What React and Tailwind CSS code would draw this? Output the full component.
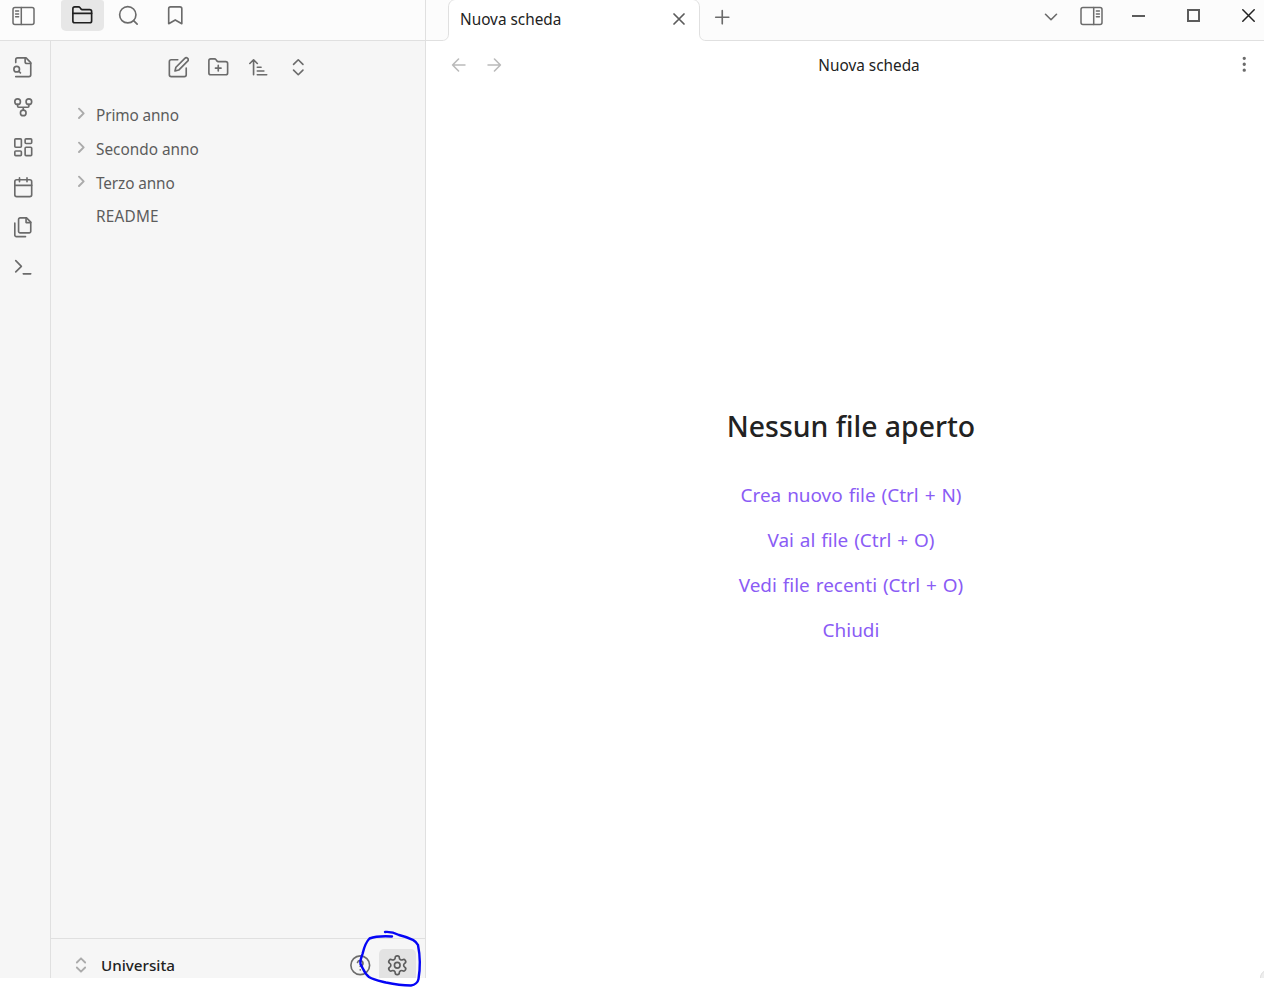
import React from "react";

function Icon({ className = "size-[22.5px]", sw = 1.75, box = "0 0 24 24", children }) {
  return (
    <svg
      viewBox={box}
      className={`shrink-0 ${className}`}
      fill="none"
      stroke="currentColor"
      strokeWidth={sw}
      strokeLinecap="round"
      strokeLinejoin="round"
    >
      {children}
    </svg>
  );
}

const ribbon = [
  <>
    <path d="M4 22h14a2 2 0 0 0 2-2V7l-5-5H6a2 2 0 0 0-2 2v3" />
    <path d="M14 2v4a2 2 0 0 0 2 2h4" />
    <circle cx="5" cy="14" r="3" />
    <path d="m9 18-1.5-1.5" />
  </>,
  <>
    <circle cx="12" cy="18" r="3" />
    <circle cx="6" cy="6" r="3" />
    <circle cx="18" cy="6" r="3" />
    <path d="M18 9v2c0 .6-.4 1-1 1H7c-.6 0-1-.4-1-1V9M12 12v3" />
  </>,
  <>
    <rect x="3" y="3" width="7" height="9" rx="1" />
    <rect x="14" y="3" width="7" height="5" rx="1" />
    <rect x="14" y="12" width="7" height="9" rx="1" />
    <rect x="3" y="16" width="7" height="5" rx="1" />
  </>,
  <>
    <rect x="3" y="4" width="18" height="18" rx="2" />
    <path d="M16 2v4M8 2v4M3 10h18" />
  </>,
  <>
    <path d="M15.5 2H8.6c-.4 0-.8.2-1.1.5-.3.3-.5.7-.5 1.1v12.8c0 .4.2.8.5 1.1.3.3.7.5 1.1.5h9.8c.4 0 .8-.2 1.1-.5.3-.3.5-.7.5-1.1V6.5L15.5 2z" />
    <path d="M3 7.6v12.8c0 .4.2.8.5 1.1.3.3.7.5 1.1.5h9.8M15 2v5h5" />
  </>,
  <path d="m4 17 6-6-6-6M12 19h8" />,
];

const tools = [
  <g transform="translate(.5 0)">
    <path d="M11 4H4a2 2 0 0 0-2 2v14a2 2 0 0 0 2 2h14a2 2 0 0 0 2-2v-7" />
    <path d="M18.5 2.5a2.121 2.121 0 0 1 3 3L12 15l-4 1 1-4 9.5-9.5z" />
  </g>,
  <>
    <path d="M4 20h16a2 2 0 0 0 2-2V8a2 2 0 0 0-2-2h-7.93a2 2 0 0 1-1.66-.9l-.82-1.2A2 2 0 0 0 7.93 3H4a2 2 0 0 0-2 2v13c0 1.1.9 2 2 2Z" />
    <path d="M12 10v6M9 13h6" />
  </>,
  <path d="m3 8 4-4 4 4M7 4v16M11 12h4M11 16h7M11 20h10" />,
  <path d="m7 15 5 5 5-5M7 9l5-5 5 5" />,
];

function PanelIcon({ right }) {
  return (
    <svg
      viewBox="0 0 23 20"
      className={right ? "h-5 w-[23px] shrink-0 -scale-x-100" : "h-5 w-[23px] shrink-0"}
      fill="none"
      stroke="currentColor"
      strokeWidth="1.5"
      strokeLinecap="round"
    >
      <rect x="1" y="1.5" width="21" height="17" rx="2" />
      <path d="M9.3 1.5v17M3.6 5.1h3M3.6 7.9h3M3.6 10.7h3" />
    </svg>
  );
}

function TreeRow({ label, folder, text }) {
  return (
    <div className="flex h-[33.6px] items-center pl-[22px]">
      <div className="flex w-[23px] pb-[2px] text-[#ababab]">
        {folder && (
          <Icon className="size-4" sw={2.9}>
            <path d="m9 18 7-7-7-7" />
          </Icon>
        )}
      </div>
      <span className={`text-[15.35px] leading-5 whitespace-nowrap text-[#5c5c5c] ${text}`}>{label}</span>
    </div>
  );
}

function Header() {
  return (
    <header className="flex h-[41px] bg-[#fcfcfc] text-[#6b6b6b]">
      <div className="flex w-[426px] border-r border-b border-[#e0e0e0]">
        <div className="w-[61px] pt-[6px] pl-[12px]">
          <PanelIcon />
        </div>
        <div className="flex h-[31px] w-[43px] justify-center rounded-b-[5px] rounded-t-[3px] bg-[#e7e7e7] pt-[4px] text-[#1f1f1f]">
          <Icon>
            <path d="M20 20a2 2 0 0 0 2-2V8a2 2 0 0 0-2-2h-7.9a2 2 0 0 1-1.69-.9L9.6 3.9A2 2 0 0 0 7.93 3H4a2 2 0 0 0-2 2v13a2 2 0 0 0 2 2Z" />
            <path d="M2 10h20" />
          </Icon>
        </div>
        <div className="flex w-[49px] justify-center pt-[4px]">
          <Icon>
            <circle cx="11.5" cy="11.5" r="8.7" />
            <path d="m21.5 21.5-3.8-3.8" />
          </Icon>
        </div>
        <div className="flex w-[44px] justify-center pt-[4px]">
          <Icon>
            <path d="m19 21-7-4-7 4V5a2 2 0 0 1 2-2h10a2 2 0 0 1 2 2v16z" />
          </Icon>
        </div>
      </div>
      <div className="flex w-[16px] border-b border-[#e0e0e0]" />
      <div className="relative flex w-[264px]">
        <svg viewBox="0 0 264 41" className="absolute inset-0 h-[41px] w-[264px]">
          <path
            d="M0 40.5C4 40.5 6.5 38 6.5 34V7C6.5 3 9 0 13 -.5H251C255 0 257.5 3 257.5 7V34C257.5 38 260 40.5 264 40.5V42H0Z"
            fill="#fff"
          />
          <path
            d="M0 40.5C4 40.5 6.5 38 6.5 34V7C6.5 3 9 0 13 -.5M251 -.5C255 0 257.5 3 257.5 7V34C257.5 38 260 40.5 264 40.5"
            fill="none"
            stroke="#e0e0e0"
          />
        </svg>
        <div className="relative flex flex-1 justify-between pt-[7px] pr-[17px] pl-[18px]">
          <span className="text-[15.35px] leading-6 whitespace-nowrap text-[#222]">Nuova scheda</span>
          <Icon className="mt-[2px] size-5 text-[#5c5c5c]" sw={2.1}>
            <path d="m18 6-12 12M6 6l12 12" />
          </Icon>
        </div>
      </div>
      <div className="flex flex-1 border-b border-[#e0e0e0]">
        <div className="flex-1 pt-[6px] pl-[5px]">
          <Icon>
            <path d="M5 12h14M12 5v14" />
          </Icon>
        </div>
        <div className="w-[40px] pt-[6px]">
          <Icon className="size-[22px]">
            <path d="m6 9 6 6 6-6" />
          </Icon>
        </div>
        <div className="w-[52px] pt-[6px]">
          <PanelIcon right />
        </div>
        <div className="w-[55px] pt-[15px]">
          <div className="h-[2px] w-[13px] bg-[#5c5c5c]" />
        </div>
        <div className="w-[55px] pt-[9px]">
          <div className="h-[13px] w-[13px] border-2 border-[#5c5c5c]" />
        </div>
        <div className="w-[22px] pt-[9px]">
          <Icon className="size-[13px]" box="0 0 13 13" sw={1.5}>
            <path d="m.8.8 11.4 11.4M12.2.8.8 12.2" stroke="#222" />
          </Icon>
        </div>
      </div>
    </header>
  );
}

function Sidebar() {
  return (
    <aside className="flex w-[375px] flex-col border-r border-[#e0e0e0]">
      <div className="flex h-[53px] items-center justify-center gap-[17.5px] text-[#6b6b6b]">
        {tools.map((t, i) => (
          <Icon key={i}>{t}</Icon>
        ))}
      </div>
      <nav className="flex-1 pt-[4.6px]">
        <TreeRow folder label="Primo anno" text="tracking-[-0.12px]" />
        <TreeRow folder label="Secondo anno" text="tracking-normal" />
        <TreeRow folder label="Terzo anno" text="tracking-[-0.12px]" />
        <TreeRow label="README" text="tracking-[0.2px]" />
      </nav>
      <footer className="relative flex h-[40px] border-t border-[#e0e0e0]">
        <div className="pt-[16px] pl-[20px] text-[#ababab]">
          <Icon className="size-5" sw={2.2}>
            <path d="m7 15 5 5 5-5M7 9l5-5 5 5" />
          </Icon>
        </div>
        <span className="flex-1 pt-[14px] pl-[10px] text-[15.2px] leading-6 font-medium text-[#222]">Universita</span>
        <div className="w-[30px] pt-[15px] text-[#6b6b6b]">
          <Icon>
            <circle cx="12" cy="12" r="10" />
            <path d="M9.09 9a3 3 0 0 1 5.83 1c0 2-3 3-3 3M12 17h.01" />
          </Icon>
        </div>
        <div className="mt-[10px] mr-[9px] flex w-[37px] justify-center rounded-t-[5px] bg-[#e3e3e3] pt-[5px] text-[#5c5c5c]">
          <Icon>
            <path d="M12.22 2h-.44a2 2 0 0 0-2 2v.18a2 2 0 0 1-1 1.73l-.43.25a2 2 0 0 1-2 0l-.15-.08a2 2 0 0 0-2.73.73l-.22.38a2 2 0 0 0 .73 2.73l.15.1a2 2 0 0 1 1 1.72v.51a2 2 0 0 1-1 1.74l-.15.09a2 2 0 0 0-.73 2.73l.22.38a2 2 0 0 0 2.73.73l.15-.08a2 2 0 0 1 2 0l.43.25a2 2 0 0 1 1 1.73V20a2 2 0 0 0 2 2h.44a2 2 0 0 0 2-2v-.18a2 2 0 0 1 1-1.73l.43-.25a2 2 0 0 1 2 0l.15.08a2 2 0 0 0 2.73-.73l.22-.39a2 2 0 0 0-.73-2.73l-.15-.08a2 2 0 0 1-1-1.74v-.5a2 2 0 0 1 1-1.74l.15-.09a2 2 0 0 0 .73-2.73l-.22-.38a2 2 0 0 0-2.73-.73l-.15.08a2 2 0 0 1-2 0l-.43-.25a2 2 0 0 1-1-1.73V4a2 2 0 0 0-2-2z" />
            <circle cx="12" cy="12" r="3" />
          </Icon>
        </div>
        <svg
          viewBox="330 920 110 67"
          className="absolute top-[-19px] left-[279px] h-[67px] w-[110px]"
          fill="none"
          stroke="#0505f5"
          strokeWidth="2.4"
          strokeLinecap="round"
          strokeLinejoin="round"
        >
          <path d="M392 936.5C384 936 375 936.5 369.5 938.5C365 943 364 948 362.5 954C361 959 359.5 961 360.5 964C363 968 364 973 369 977C374 980 380 981 386 982.5C395 984.5 403 985.5 411 985.5C415 985 418 982 418.5 979C420.5 967 420 955 418 945C416 940 407 937 399 935C395 933 391 931.5 385 932" />
        </svg>
      </footer>
    </aside>
  );
}

function Main() {
  return (
    <main className="flex flex-1 flex-col bg-white">
      <div className="flex h-[50px] items-center text-[#6b6b6b]">
        <div className="flex w-[85px] gap-[13px] pb-[3px] pl-[22px] text-[#bababa]">
          <Icon className="size-[22px]">
            <path d="m11.5 18.5-6.5-6.5 6.5-6.5M18.5 12H5" />
          </Icon>
          <Icon className="size-[22px]">
            <path d="M5.5 12h13.5M12.5 5.5l6.5 6.5-6.5 6.5" />
          </Icon>
        </div>
        <span className="flex-1 text-center text-[15.35px] whitespace-nowrap text-[#222]">Nuova scheda</span>
        <div className="w-[37px] pb-[3px] pl-[6px]">
          <Icon>
            <g fill="currentColor">
              <circle cx="12" cy="12" r=".9" />
              <circle cx="12" cy="5.7" r=".9" />
              <circle cx="12" cy="18.3" r=".9" />
            </g>
          </Icon>
        </div>
      </div>
      <div className="flex flex-col items-center pt-[315px] pl-[12px] whitespace-nowrap">
        <h1 className="h-[67px] text-[28.4px] leading-[40px] font-medium text-[#222]">Nessun file aperto</h1>
        <div className="flex flex-col items-center text-[18.95px] leading-[45px] [word-spacing:1px] text-[#8a5cf5]">
          <span>Crea nuovo file (Ctrl + N)</span>
          <span>Vai al file (Ctrl + O)</span>
          <span>Vedi file recenti (Ctrl + O)</span>
          <span>Chiudi</span>
        </div>
      </div>
      <div className="mt-auto flex justify-end text-[#e0e0e0]">
        <svg viewBox="0 0 4 7" className="h-[7px] w-[4px]">
          <path d="M0 7C0 4 2 1 4 0V7Z" fill="#eee" />
          <path d="M.5 7C.5 4 2 1.5 4 .5" fill="none" stroke="currentColor" />
        </svg>
      </div>
    </main>
  );
}

export default function App() {
  return (
    <div className="h-[987px] w-[1264px] overflow-hidden bg-white font-['Noto_Sans',sans-serif]">
      <div className="flex h-[978px] flex-col">
        <Header />
        <div className="flex flex-1 bg-[#f6f6f6]">
          <div className="flex w-[51px] flex-col gap-[17.5px] border-r border-[#e0e0e0] pt-[15px] pl-[12px] text-[#6b6b6b]">
            {ribbon.map((r, i) => (
              <Icon key={i}>{r}</Icon>
            ))}
          </div>
          <Sidebar />
          <Main />
        </div>
      </div>
    </div>
  );
}
